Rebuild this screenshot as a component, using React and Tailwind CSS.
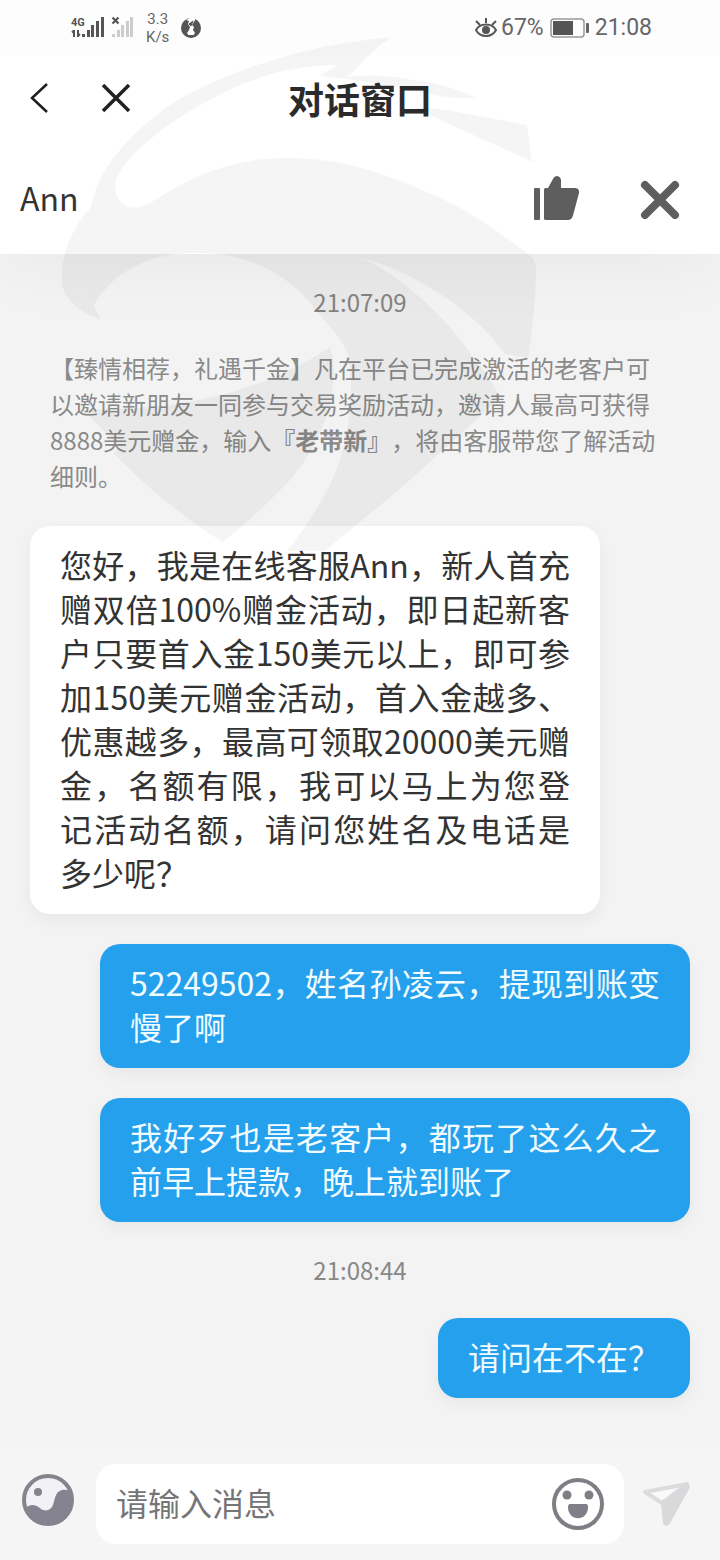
import React, { useState } from "react";

const messages = [
    { id: 1, type: "time", text: "21:07:09" },
    { id: 2, type: "notice" },
    {
        id: 3,
        type: "agent",
        text: "您好，我是在线客服Ann，新人首充赠双倍100%赠金活动，即日起新客户只要首入金150美元以上，即可参加150美元赠金活动，首入金越多、优惠越多，最高可领取20000美元赠金，名额有限，我可以马上为您登记活动名额，请问您姓名及电话是多少呢？"
    },
    { id: 4, type: "user", text: "52249502，姓名孙凌云，提现到账变慢了啊" },
    { id: 5, type: "user", text: "我好歹也是老客户，都玩了这么久之前早上提款，晚上就到账了" },
    { id: 6, type: "time", text: "21:08:44" },
    { id: 7, type: "user", text: "请问在不在？" }
];

const SignalIcons = () => (
    <svg width="64" height="24" viewBox="0 0 64 24" fill="#555" aria-hidden="true">
        <text x="0" y="10" fontSize="11" fontWeight="700" fontFamily="Roboto, sans-serif">4G</text>
        <path d="M3 14v7M1 16.500l2-2M7 14v7M7 20l2-2" stroke="#555" strokeWidth="2" fill="none" />
        <rect x="11" y="18" width="3" height="3" />
        <rect x="16" y="14" width="3" height="7" />
        <rect x="20" y="9" width="3" height="12" />
        <rect x="25" y="5" width="3" height="16" />
        <rect x="30" y="1" width="3" height="20" />
        <path d="M41.500 1.500l6 6M47.500 1.500l-6 6" stroke="#555" strokeWidth="2.200" />
        <g fill="#ccc">
            <rect x="41" y="18" width="3" height="3" />
            <rect x="46" y="14" width="3" height="7" />
            <rect x="50" y="9" width="3" height="12" />
            <rect x="55" y="5" width="3" height="16" />
            <rect x="59" y="1" width="3" height="20" />
        </g>
    </svg>
);

const GlobeIcon = () => (
    <svg width="20" height="20" viewBox="0 0 20 20" aria-hidden="true">
        <circle cx="10" cy="10" r="10" fill="#555" />
        <path d="M5 2L9 0H15L13 4 11 7 13 9 12 12 14 15 12 18H8L6 15 8 12 9 9 7 6 8 3z" fill="#fdfdfd" />
        <path d="M8 6L12 3 10 8zM4 17Q10 21 16 17" fill="#555" stroke="#555" />
    </svg>
);

const EyeIcon = () => (
    <svg width="22" height="20" viewBox="0 0 22 20" fill="none" stroke="#555" strokeWidth="2" aria-hidden="true">
        <path d="M1 12C5 4.500 17 4.500 21 12 17 20 5 20 1 12z" />
        <path d="M11 5V0M5 7L1 3M17 7l4-4" />
        <circle cx="11" cy="12" r="4" fill="#555" stroke="none" />
    </svg>
);

const BatteryIcon = () => (
    <svg width="39" height="20" viewBox="0 0 39 20" aria-hidden="true">
        <rect x="1" y="1" width="33" height="18" rx="3" fill="none" stroke="#999" strokeWidth="1.500" />
        <rect x="3" y="3" width="20" height="14" fill="#555" />
        <rect x="36" y="5" width="3" height="10" rx="1" fill="#666" />
    </svg>
);

const ThumbIcon = () => (
    <svg width="46" height="46" viewBox="0 0 46 46" fill="#5e5e5e" aria-hidden="true">
        <rect x="0" y="12" width="6" height="32" rx="1" />
        <path d="M10 13.500Q10 12 11.500 12H14L19.500 2Q21 0 23 0 26.500 .500 27 4V12H41.500Q45.500 12.500 45 17L39 39.500Q37.500 44 34 44H11.500Q10 44 10 42.500z" />
    </svg>
);

const PictureIcon = () => (
    <svg width="52" height="60" viewBox="0 0 52 60" aria-hidden="true">
        <circle cx="26" cy="26" r="24" fill="#f2f1f6" stroke="#85838c" strokeWidth="4" />
        <circle cx="16" cy="18" r="4" fill="#85838c" />
        <path d="M4 34C9 29 14 31 19 35 24 38 29 36 31 31 33 25 33 18 40 16 44 15 47 16 49.500 19 53 35 42 50 26 50 14 50 6 43 4 34z" fill="#85838f" />
    </svg>
);

const SmileIcon = () => (
    <svg width="52" height="52" viewBox="0 0 52 52" aria-hidden="true">
        <circle cx="26" cy="26" r="24" fill="none" stroke="#7f7e85" strokeWidth="4" />
        <circle cx="15" cy="17" r="4.500" fill="#7f7e85" />
        <circle cx="37" cy="17" r="4.500" fill="#7f7e85" />
        <path d="M18 26H34Q36 26 36 29C36 44 16 44 16 29Q16 26 18 26z" fill="#7f7e89" />
    </svg>
);

const SendIcon = () => (
    <svg width="48" height="48" viewBox="0 0 48 48" aria-hidden="true">
        <path d="M3 12L45 4 20 23z" fill="#f9f9f9" stroke="#dcdcde" strokeWidth="4" strokeLinejoin="round" />
        <path d="M45 4L20 23 22 43Q24 47 27 43L47 7z" fill="#d9d9dc" stroke="#d9d9dc" strokeWidth="2" strokeLinejoin="round" />
    </svg>
);

// faint eagle mark laid over the upper part of the page
const Watermark = () => (
    <svg
        className="pointer-events-none absolute left-0 top-0 z-20 w-full"
        viewBox="0 0 720 560"
        fill="#000"
        fillOpacity="0.04"
        aria-hidden="true"
    >
        <path d="M392 37C300 45 215 75 167 107 130 134 98 168 91 207 72 228 60 254 62 284 65 300 80 313 101 320L94 306C105 283 135 256 187 253 250 250 292 278 313 307 324 322 340 334 347 352 353 375 352 410 345 440 338 475 322 505 287 551H325C350 530 385 502 410 480L473 423 500 397C492 383 485 370 473 357 445 315 405 280 363 258 425 276 480 318 505 354L528 358C532 333 536 300 536 267L533 258C500 232 465 207 420 189 370 167 330 158 287 158 235 158 195 174 150 203 130 214 115 204 115 184 121 158 170 118 227 91 262 74 300 65 337 65L320 76 347 77C360 68 368 52 392 37z" />
        <path d="M320 76L347 77C375 74 390 76 413 80 435 82 455 88 477 98 455 99 437 96 420 92 390 84 355 80 320 76z" />
        <path d="M415 108C435 108 450 110 463 113L527 125 532 162C500 146 460 130 415 108z" />
        <path d="M83 409C140 411 245 405 330 347 342 385 325 440 290 480 268 503 245 525 223 542 185 520 145 485 113 453L119 447z" />
    </svg>
);

const Message = ({ message }) => {
    if (message.type === "time") {
        return <time className="self-center text-2xl leading-9 text-[#888]">{message.text}</time>;
    }

    if (message.type === "notice") {
        return (
            <p className="px-5 pb-0.5 text-2xl leading-9 text-[#8a8a8a]">
                【臻情相荐，礼遇千金】凡在平台已完成激活的老客户可以邀请新朋友一同参与交易奖励活动，邀请人最高可获得8888美元赠金，输入<b>『老带新』</b>，将由客服带您了解活动细则。
            </p>
        );
    }

    return (
        <p
            className={`rounded-[20px] px-[30px] pb-5 pt-4 text-[32px] leading-[44px] text-justify shadow-[0_6px_16px_rgba(0,0,0,0.05)] ${message.type === "user"
                ? "self-end ml-[70px] bg-[#24a0ed] text-[#f0fcff]"
                : "self-start mr-[90px] bg-white text-[#333]"
                }`}
        >
            {message.text}
        </p>
    );
};

const App = () => {
    const [draft, setDraft] = useState("");

    return (
        <div
            lang="zh-CN"
            className="relative flex min-h-screen flex-col bg-[#f3f3f3] font-['Noto_Sans_CJK_SC',sans-serif] [text-spacing-trim:space-all]"
        >
            <Watermark />

            <header className="relative z-10 bg-white shadow-[0_0_80px_rgba(0,0,0,0.06)]">
                <div className="flex h-14 items-center justify-between bg-[#fdfdfd] pl-[71px] pr-[68px] font-[Roboto,sans-serif] text-[23px] text-[#666]">
                    <div className="flex items-center">
                        <SignalIcons />
                        <div className="ml-[11px] mr-3 text-center text-[15px] leading-[18px]">
                            <div>3.3</div>
                            <div>K/s</div>
                        </div>
                        <GlobeIcon />
                    </div>
                    <div className="flex items-center">
                        <EyeIcon />
                        <span className="ml-1 mr-1.5">67%</span>
                        <BatteryIcon />
                        <span className="ml-1.5">21:08</span>
                    </div>
                </div>

                <nav className="grid h-[88px] grid-cols-[1fr_auto_1fr] items-center px-[30px]">
                    <div className="flex items-center gap-[54px]">
                        <button type="button" aria-label="返回">
                            <svg width="18" height="34" viewBox="0 0 18 34" fill="none" stroke="#1e1e1e" strokeWidth="2.500" aria-hidden="true">
                                <path d="M17 1L2 15 17 29" />
                            </svg>
                        </button>
                        <button type="button" aria-label="关闭">
                            <svg width="28" height="32" viewBox="0 0 28 32" fill="none" stroke="#222" strokeWidth="3.500" aria-hidden="true">
                                <path d="M1 1L27 27M27 1L1 27" />
                            </svg>
                        </button>
                    </div>
                    <h1 className="pb-1 text-4xl font-bold text-[#2b2b2b]">对话窗口</h1>
                </nav>

                <div className="flex h-[110px] items-center pl-5 pr-10">
                    <h2 className="flex-1 pb-1 text-[32px] text-[#333]">Ann</h2>
                    <button type="button" aria-label="点赞" className="mr-[60px]">
                        <ThumbIcon />
                    </button>
                    <button type="button" aria-label="结束对话">
                        <svg width="40" height="40" viewBox="0 0 40 40" stroke="#5e5e5e" strokeWidth="8" strokeLinecap="round" aria-hidden="true">
                            <path d="M5 6L35 36M35 6L5 36" />
                        </svg>
                    </button>
                </div>
            </header>

            <main className="flex flex-1 flex-col gap-[30px] px-[30px] pb-12 pt-[30px]">
                {messages.map((message) => (
                    <Message key={message.id} message={message} />
                ))}
            </main>

            <footer className="flex items-center bg-[#f5f5f5] py-4 pl-[22px] pr-[30px]">
                <button type="button" aria-label="图片">
                    <PictureIcon />
                </button>
                <div className="ml-[22px] mr-[18px] flex h-20 min-w-0 flex-1 items-center rounded-[20px] bg-white px-5">
                    <input
                        type="text"
                        aria-label="请输入消息"
                        placeholder="请输入消息"
                        value={draft}
                        onChange={(e) => setDraft(e.target.value)}
                        className="min-w-0 flex-1 bg-transparent pb-1 text-[32px] text-[#333] outline-none placeholder:text-[#757575]"
                    />
                    <button type="button" aria-label="表情">
                        <SmileIcon />
                    </button>
                </div>
                <button type="button" aria-label="发送">
                    <SendIcon />
                </button>
            </footer>
        </div>
    );
};

export default App;
